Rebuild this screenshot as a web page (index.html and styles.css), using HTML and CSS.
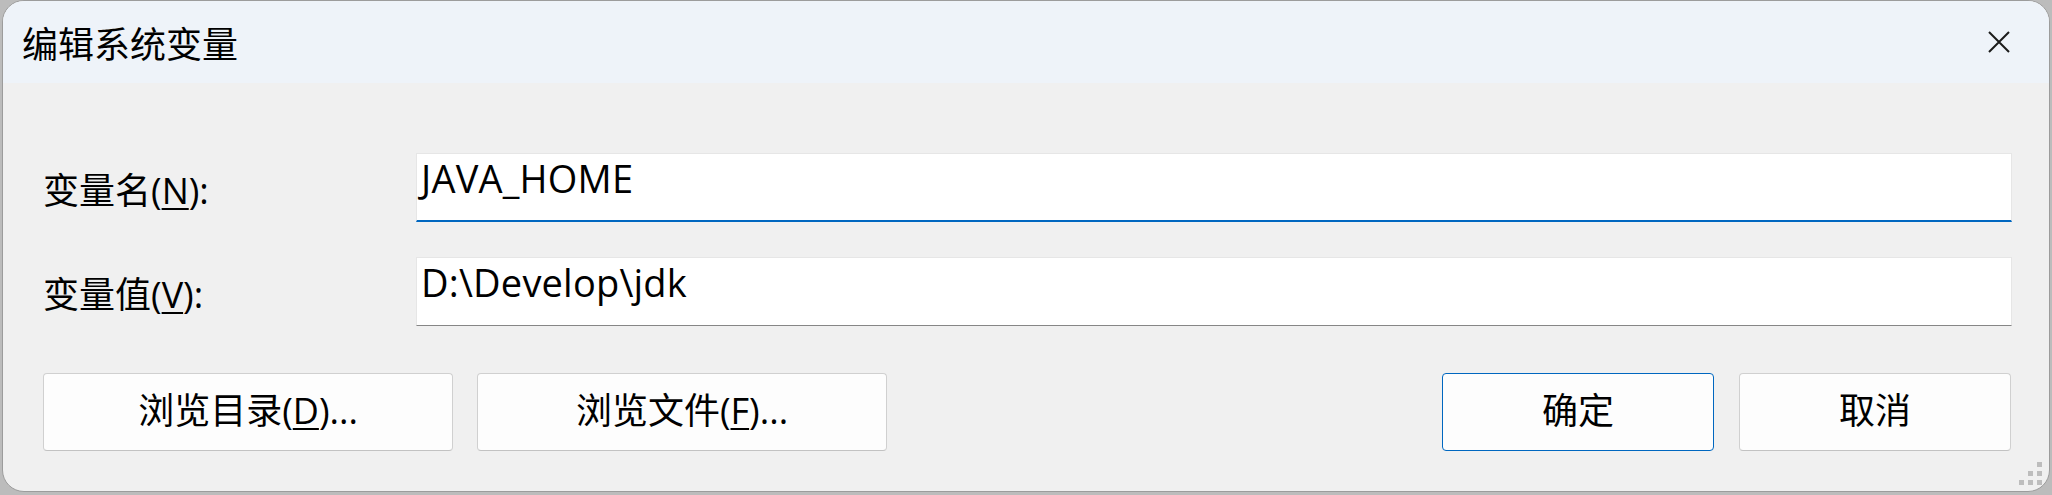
FILE: index.html
```html
<!DOCTYPE html>
<html lang="zh-CN">
<head>
<meta charset="utf-8">
<title>编辑系统变量</title>
<link rel="stylesheet" href="styles.css">
</head>
<body>
<div class="window">
  <div class="titlebar">
    <span class="title">编辑系统变量</span>
    <span class="close" aria-label="关闭">
      <svg width="22" height="22" viewBox="0 0 22 22"><path d="M1 1 L21 21 M21 1 L1 21" stroke="#1b1b1b" stroke-width="2" fill="none"/></svg>
    </span>
  </div>
  <div class="content">
    <div class="form">
      <label class="label">变量名(<u>N</u>):</label>
      <div class="field focused">JAVA_HOME</div>
      <label class="label">变量值(<u>V</u>):</label>
      <div class="field">D:\Develop\jdk</div>
    </div>
    <div class="buttons">
      <div class="group">
        <div class="btn wide">浏览目录(<u>D</u>)...</div>
        <div class="btn wide">浏览文件(<u>F</u>)...</div>
      </div>
      <div class="group right">
        <div class="btn narrow default">确定</div>
        <div class="btn narrow">取消</div>
      </div>
    </div>
    <svg class="grip" width="23" height="23" viewBox="0 0 23 23">
      <rect x="18" y="0" width="5" height="5"/>
      <rect x="9" y="9" width="5" height="5"/>
      <rect x="18" y="9" width="5" height="5"/>
      <rect x="0" y="18" width="5" height="5"/>
      <rect x="9" y="18" width="5" height="5"/>
      <rect x="18" y="18" width="5" height="5"/>
    </svg>
  </div>
</div>
</body>
</html>
```
FILE: styles.css
```css
html, body {
  margin: 0;
  padding: 0;
}
body {
  width: 2052px;
  height: 495px;
  overflow: hidden;
  background: #bcbcbc;
  font-family: "Open Sans", "Noto Sans CJK SC", sans-serif;
  font-size: 36px;
  color: #000;
}
.window {
  margin: 0 2px 3px 2px;
  height: 490px;
  border: 1px solid #9c9c9c;
  border-radius: 22px;
  background: #f0f0f0;
  overflow: hidden;
  display: flex;
  flex-direction: column;
  position: relative;
}
.titlebar {
  height: 82px;
  flex: none;
  background: #eef3f9;
  display: flex;
  align-items: center;
  justify-content: space-between;
  padding: 0 39px 0 19px;
}
.title {
  font-family: "Noto Sans CJK SC", sans-serif;
  font-size: 36px;
  line-height: 40px;
  color: #000;
}
.close {
  width: 22px;
  height: 22px;
  display: flex;
}
.content {
  flex: 1;
  padding: 70px 38px 40px 40px;
  display: flex;
  flex-direction: column;
}
.form {
  display: grid;
  grid-template-columns: 373px 1fr;
  grid-template-rows: 69px 69px;
  row-gap: 35px;
  align-items: center;
}
.label {
  font-size: 36px;
  line-height: 46px;
  margin-top: 6px;
}
.label u {
  text-underline-offset: 4px;
  text-decoration-thickness: 2px;
}
.field {
  box-sizing: border-box;
  height: 69px;
  background: #fff;
  border: 1px solid #e6e6e6;
  border-bottom: 1px solid #868686;
  padding: 0 0 0 4px;
  font-size: 38px;
  letter-spacing: 0.2px;
  line-height: 48px;
  align-self: stretch;
  margin-right: -1px;
}
.field.focused {
  border-bottom: 2px solid #0067c0;
}
.buttons {
  margin-top: 47px;
  display: flex;
  justify-content: space-between;
}
.group {
  display: flex;
  gap: 24px;
}
.group.right {
  gap: 25px;
}
.btn {
  box-sizing: border-box;
  height: 78px;
  background: #fdfdfd;
  border: 1px solid #d0d0d0;
  border-bottom-color: #c2c2c2;
  border-radius: 4px;
  display: flex;
  align-items: center;
  justify-content: center;
  font-size: 36px;
  line-height: 46px;
  padding-bottom: 2px;
}
.btn u {
  text-underline-offset: 4px;
  text-decoration-thickness: 2px;
}
.btn.wide {
  width: 410px;
}
.btn.narrow {
  width: 272px;
}
.btn.default {
  border: 1px solid #0067c0;
}
.grip {
  position: absolute;
  right: 7px;
  bottom: 6px;
  fill: #bdbdbd;
}
```
